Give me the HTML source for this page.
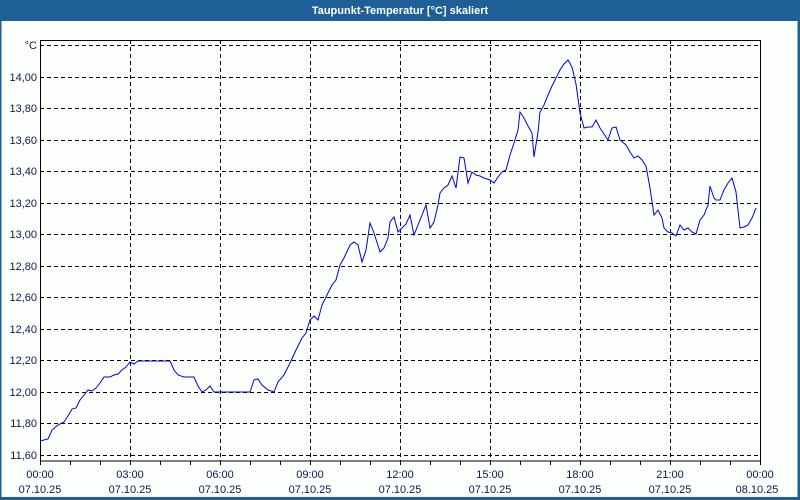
<!DOCTYPE html>
<html><head><meta charset="utf-8"><style>
html,body{margin:0;padding:0;width:800px;height:500px;overflow:hidden;background:#fcfffc;font-family:"Liberation Sans","DejaVu Sans",sans-serif}
</style></head><body>
<svg width="800" height="500" xmlns="http://www.w3.org/2000/svg" font-family="Liberation Sans, DejaVu Sans, sans-serif" font-size="11">
<rect x="0" y="0" width="800" height="500" fill="#fcfffc"/>
<rect x="0" y="0" width="800" height="21" fill="#1d5f96"/>
<rect x="0" y="0" width="1.5" height="500" fill="#1d5f96"/>
<rect x="797.5" y="0" width="2.5" height="500" fill="#1d5f96"/>
<rect x="0" y="497" width="800" height="3" fill="#1d5f96"/>
<text x="400" y="14" fill="#fff" font-weight="bold" text-anchor="middle">Taupunkt-Temperatur [°C] skaliert</text>
<g stroke="#000" stroke-width="1" stroke-dasharray="4,3" fill="none">
<path d="M40,45.5H760M40,77.5H760M40,108.5H760M40,140.5H760M40,171.5H760M40,203.5H760M40,234.5H760M40,266.5H760M40,297.5H760M40,329.5H760M40,360.5H760M40,392.5H760M40,423.5H760M40,455.5H760"/>
<path d="M130.5,40V461M220.5,40V461M310.5,40V461M400.5,40V461M490.5,40V461M580.5,40V461M670.5,40V461"/>
</g>
<rect x="40.5" y="40.5" width="720" height="420.5" fill="none" stroke="#000" stroke-width="1"/>
<path stroke="#000" fill="none" d="M40.5,461V465M70.5,461V465M100.5,461V465M130.5,461V465M160.5,461V465M190.5,461V465M220.5,461V465M250.5,461V465M280.5,461V465M310.5,461V465M340.5,461V465M370.5,461V465M400.5,461V465M430.5,461V465M460.5,461V465M490.5,461V465M520.5,461V465M550.5,461V465M580.5,461V465M610.5,461V465M640.5,461V465M670.5,461V465M700.5,461V465M730.5,461V465M760.5,461V465"/>
<g fill="#0c1a4a" text-anchor="end">
<text x="37" y="49">°C</text>
<text x="37" y="81">14,00</text><text x="37" y="112">13,80</text><text x="37" y="144">13,60</text><text x="37" y="175">13,40</text><text x="37" y="207">13,20</text><text x="37" y="238">13,00</text><text x="37" y="270">12,80</text><text x="37" y="301">12,60</text><text x="37" y="333">12,40</text><text x="37" y="364">12,20</text><text x="37" y="396">12,00</text><text x="37" y="427">11,80</text><text x="37" y="459">11,60</text>
</g>
<g fill="#0c1a4a" text-anchor="middle">
<text x="40" y="478">00:00</text><text x="130" y="478">03:00</text><text x="220" y="478">06:00</text><text x="310" y="478">09:00</text><text x="400" y="478">12:00</text><text x="490" y="478">15:00</text><text x="580" y="478">18:00</text><text x="670" y="478">21:00</text><text x="760" y="478">00:00</text>
<text x="40" y="493">07.10.25</text><text x="130" y="493">07.10.25</text><text x="220" y="493">07.10.25</text><text x="310" y="493">07.10.25</text><text x="400" y="493">07.10.25</text><text x="490" y="493">07.10.25</text><text x="580" y="493">07.10.25</text><text x="670" y="493">07.10.25</text><text x="757" y="493">08.10.25</text>
</g>
<polyline fill="none" stroke="#0000e0" stroke-width="1" points="40,441 48,439 52,430 58,425 64,422 68,416 72,409 76,408 80,400 84,395 88,390 92,391 96,388 100,383 104,377 110,377 114,375 118,374 122,370 126,367 130,362 134,364 138,361 170,361 174,370 178,375 184,377 194,377 198,386 202,392 206,390 210,386 214,392 250,392 254,380 258,379 262,385 268,390 274,392 278,382 284,375 290,363 296,350 302,338 306,333 310,320 314,316 318,320 322,305 328,293 332,285 336,280 340,265 344,258 350,245 354,242 358,245 362,262 366,250 370,223 374,233 380,252 384,248 388,238 390,222 394,217 398,232 402,228 406,224 410,215 414,235 418,225 422,215 426,205 430,228 434,222 438,205 440,193 444,188 448,185 452,176 456,188 460,157 464,158 468,183 472,172 476,175 480,176 484,178 490,180 494,183 498,177 502,172 506,170 510,155 514,143 518,130 520,112 524,118 528,126 532,133 534,157 538,132 540,112 544,105 548,95 552,86 556,78 560,70 564,64 568,60 572,67 576,84 580,113 584,128 588,127 592,127 596,120 600,128 604,134 608,140 612,128 616,127 620,140 626,145 630,152 634,158 638,156 642,160 646,166 650,188 654,215 658,210 662,218 664,228 668,232 672,233 676,236 680,225 684,230 688,228 692,232 696,234 700,220 704,215 708,205 710,186 714,198 716,200 720,200 724,190 728,183 732,178 736,192 740,228 744,227 748,225 752,218 756,208"/>
</svg>
</body></html>
